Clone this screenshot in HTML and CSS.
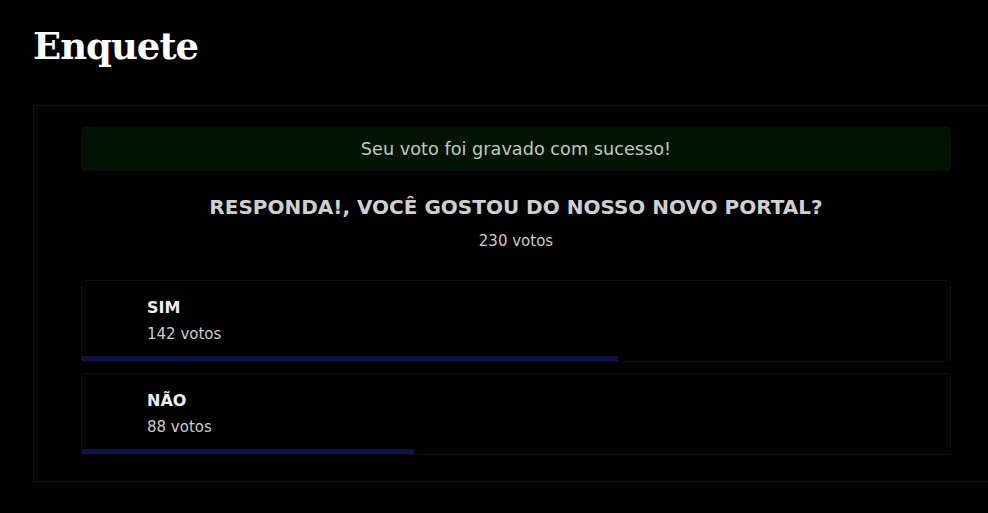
FILE: index.html
```html
<!DOCTYPE html>
<html lang="pt-BR">
<head>
    <meta charset="UTF-8">
    <meta name="viewport" content="width=device-width, initial-scale=1.0">
    <title>Enquete</title>
    <link rel="stylesheet" href="styles.css">
</head>
<body>
    <h1 class="page-title">Enquete</h1>

    <div class="poll">
        <div class="alert-success">Seu voto foi gravado com sucesso!</div>

        <h2 class="poll-question">RESPONDA!, VOCÊ GOSTOU DO NOSSO NOVO PORTAL?</h2>
        <div class="poll-total">230 votos</div>

        <div class="poll-options">
            <div class="option">
                <div class="option-info">
                    <div class="option-name">SIM</div>
                    <div class="option-votes">142 votos</div>
                </div>
                <div class="option-bar" style="width: 61.7%;"></div>
            </div>
            <div class="option">
                <div class="option-info">
                    <div class="option-name">NÃO</div>
                    <div class="option-votes">88 votos</div>
                </div>
                <div class="option-bar" style="width: 38.3%;"></div>
            </div>
        </div>
    </div>
</body>
</html>
```

FILE: styles.css
```css
html, body {
    overflow-x: hidden;
}
body {
    margin: 0;
    padding: 23px 0 0 33px;
    background: #000;
    color: #eee;
    font-family: "DejaVu Sans", sans-serif;
}
.page-title {
    margin: 0 0 36px 0;
    font-family: "DejaVu Serif", serif;
    font-size: 37px;
    line-height: 46px;
    font-weight: bold;
    letter-spacing: -1px;
    color: #fff;
}
.poll {
    width: 966px;
    box-sizing: border-box;
    padding: 21px 47px 26px;
    border: 1px solid #111;
}
.alert-success {
    height: 44px;
    display: flex;
    align-items: center;
    justify-content: center;
    background: #031303;
    border-radius: 4px;
    color: #bccbbc;
    font-size: 17.7px;
}
.poll-question {
    margin: 24px 0 0;
    text-align: center;
    font-size: 20px;
    font-weight: bold;
    color: #cfcfcf;
}
.poll-total {
    margin-top: 13px;
    text-align: center;
    font-size: 15px;
    color: #ccc;
}
.poll-options {
    margin-top: 30px;
    display: flex;
    flex-direction: column;
    gap: 11px;
}
.option {
    height: 82px;
    box-sizing: border-box;
    display: flex;
    flex-direction: column;
    border: 1px solid #0e0e0e;
    border-radius: 3px;
}
.option-info {
    padding: 17px 0 0 65px;
}
.option-name {
    font-size: 16px;
    font-weight: bold;
    color: #f0f0f0;
}
.option-votes {
    margin-top: 8px;
    font-size: 15px;
    color: #ccc;
}
.option-bar {
    margin-top: auto;
    height: 5px;
    background: #0a1446;
}
```
